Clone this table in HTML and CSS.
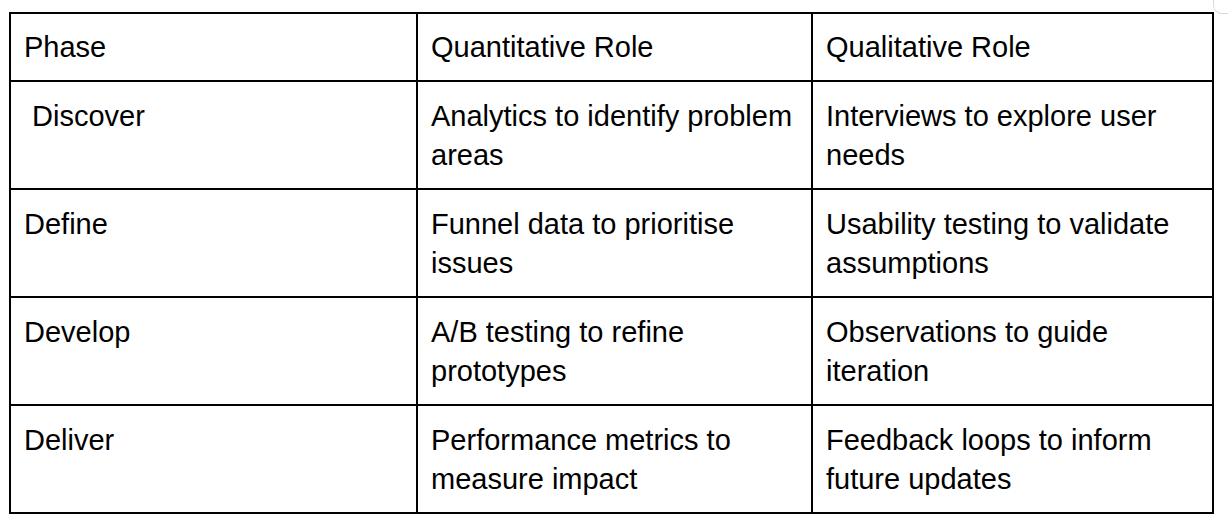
FILE: index.html
```html
<!DOCTYPE html>
<html>
<head>
<meta charset="utf-8">
<link rel="stylesheet" href="styles.css">
</head>
<body>
<div class="page">
  <table class="grid">
    <colgroup>
      <col class="c1">
      <col class="c2">
      <col class="c3">
    </colgroup>
    <tr class="head">
      <td>Phase</td>
      <td>Quantitative Role</td>
      <td>Qualitative Role</td>
    </tr>
    <tr>
      <td>&nbsp;Discover</td>
      <td>Analytics to identify problem areas</td>
      <td>Interviews to explore user needs</td>
    </tr>
    <tr>
      <td>Define</td>
      <td>Funnel data to prioritise issues</td>
      <td>Usability testing to validate assumptions</td>
    </tr>
    <tr>
      <td>Develop</td>
      <td>A/B testing to refine prototypes</td>
      <td>Observations to guide iteration</td>
    </tr>
    <tr>
      <td>Deliver</td>
      <td>Performance metrics to measure impact</td>
      <td>Feedback loops to inform future updates</td>
    </tr>
  </table>
  <div class="handle"></div>
</div>
</body>
</html>
```

FILE: styles.css
```css
html, body {
  margin: 0;
  padding: 0;
  background: #fff;
}
.page {
  position: relative;
  width: 1228px;
  height: 526px;
  padding: 12px 0 0 9px;
  box-sizing: border-box;
  font-family: "Liberation Sans", Arial, sans-serif;
  color: #000;
  overflow: hidden;
}
.grid {
  border-collapse: collapse;
  table-layout: fixed;
  width: 1205px;
}
.c1 { width: 407px; }
.c2 { width: 395px; }
.c3 { width: 401px; }
.grid td {
  border: 2px solid #000;
  padding: 15px 8px 13px 13px;
  font-size: 29px;
  line-height: 39px;
  vertical-align: top;
}
.grid .head td {
  padding-top: 14px;
  padding-bottom: 13px;
}
.handle {
  position: absolute;
  left: 1213px;
  top: -10px;
  width: 24px;
  height: 22px;
  border: 1px solid #d8d8d8;
  border-radius: 9px;
}
```
